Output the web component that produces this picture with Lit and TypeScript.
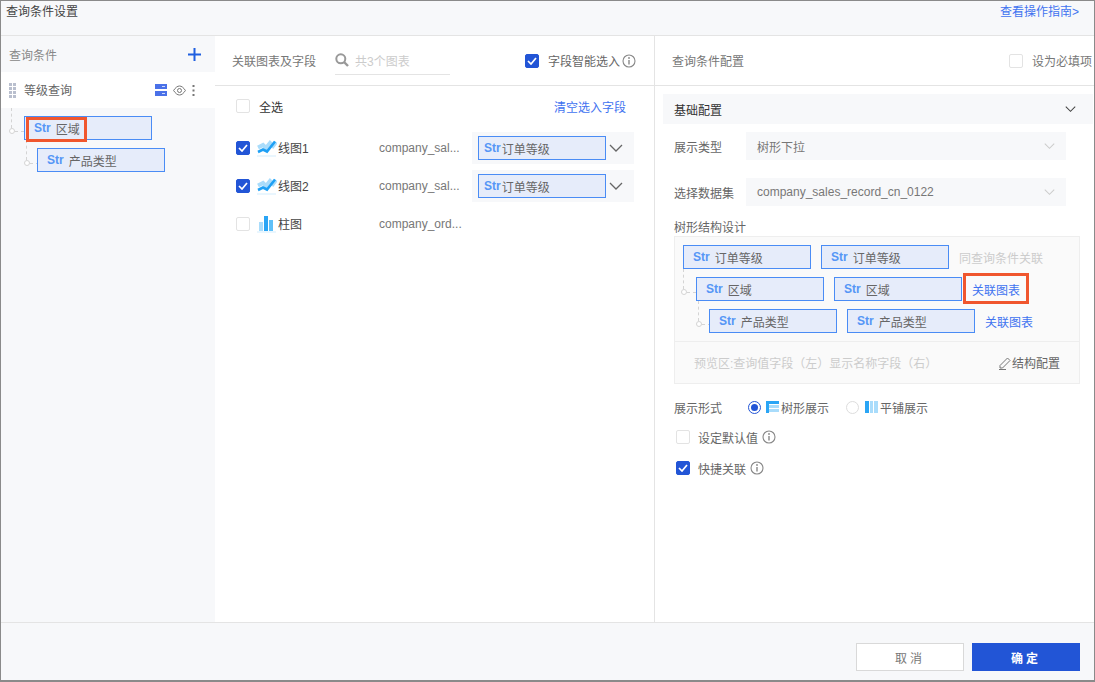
import { LitElement, html, css, svg } from 'lit';
import { customElement } from 'lit/decorators.js';

const chevron = (color = '#666', w = 14) => html`<svg width=${w} height="8" viewBox="0 0 14 8" fill="none"><path d="M1 1l6 6 6-6" stroke=${color} stroke-width="1.3"/></svg>`;

const info = html`<svg class="info" width="14" height="14" viewBox="0 0 14 14" fill="none"><circle cx="7" cy="7" r="6" stroke="#888" stroke-width="1.1"/><path d="M7 6v4.400" stroke="#888" stroke-width="1.400"/><circle cx="7" cy="4" r=".9" fill="#888"/></svg>`;

const lineIcon = svg`<svg width="20" height="18" viewBox="0 0 20 18" fill="none">
  <path d="M1 8.500l5-2.500 3 3 4-5 3 3 3-4" stroke="#a9dcfb" stroke-width="4"/>
  <path d="M1 13l5-2.500 4 2 8-10" stroke="#1ea0f5" stroke-width="2.600"/>
  <path d="M0 17h19" stroke="#d3edfd" stroke-width="1"/>
</svg>`;

const barIcon = svg`<svg width="20" height="18" viewBox="0 0 20 18" fill="none">
  <rect x="2" y="7" width="4" height="9" fill="#a9dcfb"/>
  <rect x="7" y="1" width="4" height="15" fill="#2aa5f5"/>
  <rect x="12" y="5" width="4" height="11" fill="#5fc0f8"/>
  <path d="M0 17h19" stroke="#d3edfd" stroke-width="1"/>
</svg>`;

@customElement('app-root')
export class AppRoot extends LitElement {
  static styles = css`
    :host {
      display: block;
      width: 1095px;
      height: 682px;
      font-family: "Liberation Sans", "Noto Sans CJK SC", sans-serif;
      font-size: 12px;
      color: #666;
    }
    * { box-sizing: border-box; }

    .frame {
      width: 100%;
      height: 100%;
      display: flex;
      flex-direction: column;
      border: 1px solid #8a8a8a;
      border-bottom-width: 2px;
      background: #fff;
    }

    .top {
      height: 35px;
      flex-shrink: 0;
      display: flex;
      justify-content: space-between;
      padding: 2px 15px 0 5px;
      background: #f7f8fa;
      border-bottom: 1px solid #e4e4e4;
      line-height: 18px;
      color: #444;
    }
    a { color: #3f73f0; text-decoration: none; }

    .body { flex: 1; display: flex; min-height: 0; }

    /* left column */
    .left { width: 214px; flex-shrink: 0; background: #f7f8fa; }
    .left-head {
      height: 36px;
      display: flex;
      align-items: center;
      justify-content: space-between;
      padding: 0 14px 0 8px;
      color: #888;
    }
    .query-row {
      height: 36px;
      background: #fff;
      display: flex;
      align-items: center;
      padding: 0 20px 0 8px;
      color: #666;
    }
    .grip { margin-right: 8px; }
    .query-row .name { flex: 1; padding-bottom: 1px; }
    .query-row .tools { display: flex; align-items: center; gap: 6px; }
    .left-tree {
      position: relative;
      padding: 8px 0 0 23px;
      display: flex;
      flex-direction: column;
      gap: 8px;
    }

    /* chips */
    .chip {
      position: relative;
      width: 128px;
      height: 24px;
      flex-shrink: 0;
      display: flex;
      align-items: center;
      gap: 5px;
      padding-left: 9px;
      background: #e6ecfa;
      border: 1px solid #4a8cf5;
      color: #666;
    }
    .chip b { color: #5596f6; font-weight: 700; }
    .chip.tight { gap: 1px; padding-left: 5px; }
    .indent1 { margin-left: 13px; }
    .indent2 { margin-left: 26px; }

    .mark {
      position: absolute;
      left: 1px;
      top: 0;
      width: 61px;
      height: 25px;
      border: 3px solid #f0562e;
    }
    .dash-v {
      position: absolute;
      width: 0;
      border-left: 1px dashed #d4d4d4;
    }
    .dash-h {
      position: absolute;
      width: 9px;
      border-top: 1px dashed #d4d4d4;
    }
    .dot {
      position: absolute;
      width: 6px;
      height: 6px;
      border-radius: 50%;
      border: 1px solid #d4d4d4;
      background: #fff;
    }

    /* middle column */
    .mid { width: 440px; flex-shrink: 0; border-right: 1px solid #e4e4e4; }
    .pane-head {
      height: 50px;
      display: flex;
      align-items: center;
      border-bottom: 1px solid #e4e4e4;
      color: #777;
    }
    .mid .pane-head { padding: 0 18px 0 17px; }
    .search {
      width: 115px;
      height: 29px;
      margin-left: 19px;
      display: flex;
      align-items: center;
      gap: 6px;
      border-bottom: 1px solid #e4e4e4;
      color: #ccc;
    }
    .smart { margin-left: auto; display: flex; align-items: center; gap: 9px; color: #666; }
    .smart .info { margin-left: -7px; }

    .box {
      width: 14px;
      height: 14px;
      flex-shrink: 0;
      border: 1px solid #e3e3e3;
      border-radius: 2px;
      background: #fff;
      display: flex;
      align-items: center;
      justify-content: center;
    }
    .box.on { background: #2255d6; border-color: #2255d6; }

    .all {
      height: 40px;
      display: flex;
      align-items: center;
      justify-content: space-between;
      padding: 0 28px 0 21px;
      color: #333;
    }
    .all span.l { display: flex; align-items: center; gap: 9px; }

    .rows { display: flex; flex-direction: column; gap: 6px; padding: 6px 20px 0 21px; }
    .row { height: 32px; display: flex; align-items: center; }
    .row .chart { width: 143px; display: flex; align-items: center; color: #444; }
    .row .chart > svg { margin: 0 1px 0 7px; }
    .row .chart span:last-child { padding-bottom: 2px; }
    .row .ds { width: 93px; color: #777; white-space: nowrap; }
    .pick {
      width: 162px;
      height: 32px;
      display: flex;
      align-items: center;
      gap: 3px;
      padding-left: 6px;
      background: #f7f8fa;
    }

    /* right column */
    .right { flex: 1; min-width: 0; }
    .right .pane-head { justify-content: space-between; padding: 0 2px 0 17px; }
    .req { display: flex; align-items: center; gap: 9px; color: #777; }
    .conf { padding: 8px 1px 0 8px; }
    .bar {
      height: 30px;
      display: flex;
      align-items: center;
      justify-content: space-between;
      padding: 0 17px 0 11px;
      background: #f7f8fa;
      color: #333;
    }
    .inner { padding: 0 13px 0 11px; }
    .field { display: flex; align-items: center; margin-top: 8px; height: 28px; color: #666; }
    .field + .field { margin-top: 18px; }
    .field label { width: 72px; }
    .select {
      width: 320px;
      height: 100%;
      display: flex;
      align-items: center;
      justify-content: space-between;
      padding: 0 11px;
      background: #f7f8fa;
      color: #777;
    }
    .caption { margin-top: 14px; line-height: 16px; color: #666; }
    .tree {
      margin-top: 0;
      height: 148px;
      background: #fafafa;
      border: 1px solid #eee;
    }
    .tree-rows {
      position: relative;
      height: 105px;
      padding: 8px 0 0 8px;
      display: flex;
      flex-direction: column;
      gap: 8px;
      border-bottom: 1px solid #eee;
    }
    .tr { display: flex; align-items: center; gap: 10px; }
    .tr .note { color: #ccc; }
    .tr a { position: relative; }
    .outline {
      position: absolute;
      left: -9px;
      top: -8px;
      width: 66px;
      height: 31px;
      border: 3px solid #f0562e;
    }
    .tree-foot {
      height: 41px;
      display: flex;
      align-items: center;
      justify-content: space-between;
      padding: 0 19px 0 19px;
      color: #ccc;
    }
    .struct { display: flex; align-items: center; color: #666; }

    .show { margin-top: 15px; display: flex; align-items: center; height: 16px; color: #666; }
    .show label { width: 74px; }
    .radio {
      width: 13px;
      height: 13px;
      border-radius: 50%;
      border: 1px solid #ddd;
      background: #fff;
      margin-right: 5px;
      display: flex;
      align-items: center;
      justify-content: center;
    }
    .radio.on { border-color: #2255d6; }
    .radio.on::after { content: ""; width: 7px; height: 7px; border-radius: 50%; background: #2255d6; }
    .show .second { margin-left: 17px; }
    .show svg { margin-right: 2px; }

    .opt { display: flex; align-items: center; margin: 14px 0 0 2px; height: 16px; color: #666; gap: 8px; }
    .opt + .opt { margin-top: 15px; }
    .opt .info { margin-left: -4px; }

    /* footer */
    .foot {
      height: 58px;
      flex-shrink: 0;
      display: flex;
      justify-content: flex-end;
      gap: 8px;
      padding: 20px 14px 0 0;
      background: #f7f8fa;
      border-top: 1px solid #e4e4e4;
    }
    button {
      width: 108px;
      height: 28px;
      font: inherit;
      letter-spacing: 3px;
      border: 1px solid #d9d9d9;
      background: #fff;
      color: #777;
      padding: 0;
    }
    button.ok { background: #2255d6; border-color: #2255d6; color: #fff; font-weight: 700; }
  `;

  private chip(name: string, cls = '', extra: unknown = '') {
    return html`<div class="chip ${cls}"><b>Str</b><span>${name}</span>${extra}</div>`;
  }

  private box(on = false) {
    return html`<span class="box ${on ? 'on' : ''}">${on
      ? html`<svg width="10" height="8" viewBox="0 0 10 8" fill="none"><path d="M1 4l3 3 5-6" stroke="#fff" stroke-width="1.700"/></svg>`
      : ''}</span>`;
  }

  private chartRow(on: boolean, icon: unknown, name: string, ds: string, picked: boolean) {
    return html`<div class="row">
      <div class="chart">${this.box(on)}${icon}<span>${name}</span></div>
      <div class="ds">${ds}</div>
      ${picked ? html`<div class="pick">${this.chip('订单等级', 'tight')}${chevron('#666')}</div>` : ''}
    </div>`;
  }

  render() {
    return html`<div class="frame">
      <div class="top"><span>查询条件设置</span><a>查看操作指南&gt;</a></div>
      <div class="body">
        <div class="left">
          <div class="left-head">
            <span>查询条件</span>
            <svg width="13" height="13" viewBox="0 0 13 13"><path d="M6.500 0v13M0 6.500h13" stroke="#1f5fe0" stroke-width="2"/></svg>
          </div>
          <div class="query-row">
            <svg class="grip" width="7" height="15" viewBox="0 0 7 15" fill="#b9bfce">
              <rect y="0" width="3" height="3"/><rect x="4" y="0" width="3" height="3"/>
              <rect y="4" width="3" height="3"/><rect x="4" y="4" width="3" height="3"/>
              <rect y="8" width="3" height="3"/><rect x="4" y="8" width="3" height="3"/>
              <rect y="12" width="3" height="3"/><rect x="4" y="12" width="3" height="3"/>
            </svg>
            <span class="name">等级查询</span>
            <span class="tools">
              <svg width="12" height="12" viewBox="0 0 12 12"><rect width="12" height="5" fill="#4a71e8"/><rect y="7" width="12" height="5" fill="#4a71e8"/><path d="M7 2.500h3M7 9.500h3" stroke="#cfdafa"/></svg>
              <svg width="13" height="11" viewBox="0 0 13 11" fill="none" stroke="#777"><path d="M.6 5.500C2.500 2.500 4.500 1 6.500 1s4 1.500 5.900 4.500C10.500 8.500 8.500 10 6.500 10S2.500 8.500.6 5.500z"/><circle cx="6.500" cy="5.500" r="2"/></svg>
              <svg width="3" height="11" viewBox="0 0 3 11" fill="#777"><rect x=".5" width="2" height="2"/><rect x=".5" y="4.500" width="2" height="2"/><rect x=".5" y="9" width="2" height="2"/></svg>
            </span>
          </div>
          <div class="left-tree">
            <span class="dash-v" style="left:10px;top:0;height:20px"></span>
            <span class="dash-h" style="left:14px;top:23px"></span>
            <span class="dot" style="left:8px;top:20px"></span>
            <span class="dash-v" style="left:25px;top:32px;height:20px"></span>
            <span class="dash-h" style="left:29px;top:55px"></span>
            <span class="dot" style="left:23px;top:52px"></span>
            ${this.chip('区域', '', html`<span class="mark"></span>`)}
            ${this.chip('产品类型', 'indent1')}
          </div>
        </div>

        <div class="mid">
          <div class="pane-head">
            <span>关联图表及字段</span>
            <div class="search">
              <svg width="14" height="14" viewBox="0 0 14 14" fill="none" stroke="#999"><circle cx="5.800" cy="5.800" r="4.500" stroke-width="2"/><path d="M9 9l4 4" stroke-width="2.400"/></svg>
              <span>共3个图表</span>
            </div>
            <div class="smart">${this.box(true)}<span>字段智能选入</span>${info}</div>
          </div>
          <div class="all">
            <span class="l">${this.box()}<span>全选</span></span>
            <a>清空选入字段</a>
          </div>
          <div class="rows">
            ${this.chartRow(true, lineIcon, '线图1', 'company_sal...', true)}
            ${this.chartRow(true, lineIcon, '线图2', 'company_sal...', true)}
            ${this.chartRow(false, barIcon, '柱图', 'company_ord...', false)}
          </div>
        </div>

        <div class="right">
          <div class="pane-head">
            <span>查询条件配置</span>
            <span class="req">${this.box()}<span>设为必填项</span></span>
          </div>
          <div class="conf">
            <div class="bar"><span>基础配置</span>${chevron('#444', 11)}</div>
            <div class="inner">
              <div class="field"><label>展示类型</label><div class="select"><span>树形下拉</span>${chevron('#ccc', 11)}</div></div>
              <div class="field"><label>选择数据集</label><div class="select"><span>company_sales_record_cn_0122</span>${chevron('#ccc', 11)}</div></div>
              <div class="caption">树形结构设计</div>
              <div class="tree">
                <div class="tree-rows">
                  <span class="dash-v" style="left:8px;top:32px;height:20px"></span>
                  <span class="dash-h" style="left:12px;top:55px"></span>
                  <span class="dot" style="left:6px;top:52px"></span>
                  <span class="dash-v" style="left:23px;top:64px;height:20px"></span>
                  <span class="dash-h" style="left:27px;top:87px"></span>
                  <span class="dot" style="left:21px;top:84px"></span>
                  <div class="tr">${this.chip('订单等级')}${this.chip('订单等级')}<span class="note">同查询条件关联</span></div>
                  <div class="tr indent1">${this.chip('区域')}${this.chip('区域')}<a>关联图表<span class="outline"></span></a></div>
                  <div class="tr indent2">${this.chip('产品类型')}${this.chip('产品类型')}<a>关联图表</a></div>
                </div>
                <div class="tree-foot">
                  <span>预览区:查询值字段（左）显示名称字段（右）</span>
                  <span class="struct">
                    <svg width="14" height="14" viewBox="0 0 14 14" fill="none" stroke="#777"><path d="M2 9.500L9.500 2l2.500 2.500L4.500 12H2zM1 13.500h7"/></svg>
                    结构配置
                  </span>
                </div>
              </div>
              <div class="show">
                <label>展示形式</label>
                <span class="radio on"></span>
                <svg width="13" height="12" viewBox="0 0 13 12"><rect width="13" height="3" fill="#2aa5f5"/><rect y="3" width="3" height="9" fill="#2aa5f5"/><rect x="3" y="4" width="10" height="3" fill="#a9dcfb"/><rect x="3" y="8" width="10" height="3" fill="#a9dcfb"/></svg>
                <span>树形展示</span>
                <span class="radio second"></span>
                <svg style="margin-left:1px" width="13" height="12" viewBox="0 0 13 12"><rect width="4" height="12" fill="#2aa5f5"/><rect x="5" width="3" height="12" fill="#a9dcfb"/><rect x="9" width="4" height="12" fill="#a9dcfb"/></svg>
                <span>平铺展示</span>
              </div>
              <div class="opt">${this.box()}<span>设定默认值</span>${info}</div>
              <div class="opt">${this.box(true)}<span>快捷关联</span>${info}</div>
            </div>
          </div>
        </div>
      </div>
      <div class="foot">
        <button>取消</button>
        <button class="ok">确定</button>
      </div>
    </div>`;
  }
}
